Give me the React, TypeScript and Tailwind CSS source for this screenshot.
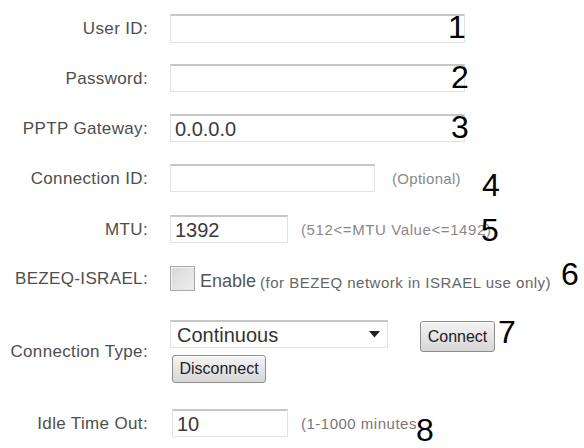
import React from "react";

const Label = ({ children }: { children: React.ReactNode }) => (
  <div className="w-[148px] shrink-0 text-right text-[17px] leading-none text-[#4e4e4e] tracking-[0.35px]">
    {children}
  </div>
);

const Field = ({ w, value, h = 28 }: { w: string; value?: string; h?: number }) => (
  <div
    className={`${w} bg-white border border-[#e2e2e2] border-t-2 border-t-[#c6c6c6] flex items-center pl-[4px] text-[20px] leading-none text-[#3a3a3a]`}
    style={{ height: h }}
  >
    {value}
  </div>
);

const Btn = ({ children, cls }: { children: React.ReactNode; cls: string }) => (
  <div
    className={`${cls} flex items-center justify-center rounded-[3px] border border-[#8e8e8e] bg-gradient-to-b from-[#f4f4f4] to-[#d6d6d6] text-[16px] leading-none text-[#222] shadow-[inset_0_1px_0_#fff]`}
  >
    {children}
  </div>
);

export default function App() {
  const digits: { d: string; l: number; t: number }[] = [
    { d: "1", l: 448, t: 11 },
    { d: "2", l: 451, t: 61 },
    { d: "3", l: 451, t: 111 },
    { d: "4", l: 482, t: 169 },
    { d: "5", l: 481, t: 214 },
    { d: "6", l: 561, t: 258 },
    { d: "7", l: 498, t: 316 },
    { d: "8", l: 416, t: 414 },
  ];
  return (
    <div
      className="relative w-[584px] h-[448px] bg-white overflow-hidden"
      style={{ fontFamily: '"Liberation Sans", Arial, sans-serif' }}
    >
      <div className="flex flex-col pt-[14px]">
        <div className="flex items-center h-[29px]">
          <Label>User ID:</Label>
          <div className="ml-[22px]">
            <Field w="w-[295px]" h={29} />
          </div>
        </div>
        <div className="flex items-center h-[28px] mt-[21px]">
          <Label>Password:</Label>
          <div className="ml-[22px]">
            <Field w="w-[295px]" />
          </div>
        </div>
        <div className="flex items-center h-[28px] mt-[22px]">
          <Label>PPTP Gateway:</Label>
          <div className="ml-[22px]">
            <Field w="w-[295px]" value="0.0.0.0" />
          </div>
        </div>
        <div className="flex items-center h-[28px] mt-[22px]">
          <Label>Connection ID:</Label>
          <div className="ml-[22px] flex items-center">
            <Field w="w-[205px]" />
            <span className="ml-[17px] text-[15px] leading-none text-[#8a8a8a] tracking-[0.3px]">(Optional)</span>
          </div>
        </div>
        <div className="flex items-center h-[28px] mt-[23px]">
          <Label>MTU:</Label>
          <div className="ml-[22px] flex items-center">
            <Field w="w-[118px]" value="1392" />
            <span className="ml-[13px] text-[15px] leading-none text-[#888] tracking-[0.6px]">
              (512&lt;=MTU Value&lt;=1492)
            </span>
          </div>
        </div>
        <div className="flex items-center h-[28px] mt-[21px]">
          <Label>BEZEQ-ISRAEL:</Label>
          <div className="ml-[22px] flex items-center">
            <div className="w-[25px] h-[25px] border border-[#a9a9a9] bg-gradient-to-br from-[#d8d8d8] to-[#eeeeee] shadow-[inset_1px_1px_0_#f4f4f4]" />
            <span className="ml-[5px] mt-[6px] text-[18px] leading-none text-[#555]">Enable</span>
            <span className="ml-[4px] mt-[8px] text-[15px] leading-none text-[#666] tracking-[0.5px]">
              (for BEZEQ network in ISRAEL use only)
            </span>
          </div>
        </div>
        <div className="flex items-center h-[63px] mt-[28px]">
          <Label>Connection Type:</Label>
          <div className="ml-[22px] flex flex-col">
            <div className="flex items-start">
              <div className="w-[218px] h-[28px] bg-white border border-[#e2e2e2] border-t-2 border-t-[#c6c6c6] flex items-center justify-between pl-[6px] pr-[7px] text-[20px] leading-none text-[#333]">
                <span>Continuous</span>
                <svg width="11" height="7" viewBox="0 0 11 7">
                  <path d="M0 0 L11 0 L5.5 6.5 Z" fill="#222" />
                </svg>
              </div>
              <Btn cls="ml-[32px] mt-[1px] w-[75px] h-[31px]">Connect</Btn>
            </div>
            <Btn cls="ml-[2px] mt-[3px] w-[94px] h-[28px]">Disconnect</Btn>
          </div>
        </div>
        <div className="flex items-center h-[28px] mt-[26px]">
          <Label>Idle Time Out:</Label>
          <div className="ml-[24px] flex items-center">
            <Field w="w-[116px]" value="10" />
            <span className="ml-[13px] text-[15px] leading-none text-[#777] tracking-[0.5px]">(1-1000 minutes</span>
          </div>
        </div>
      </div>
      {digits.map((x) => (
        <div
          key={x.d}
          className="absolute text-[32px] leading-[32px] text-black"
          style={{ left: x.l, top: x.t }}
        >
          {x.d}
        </div>
      ))}
    </div>
  );
}
